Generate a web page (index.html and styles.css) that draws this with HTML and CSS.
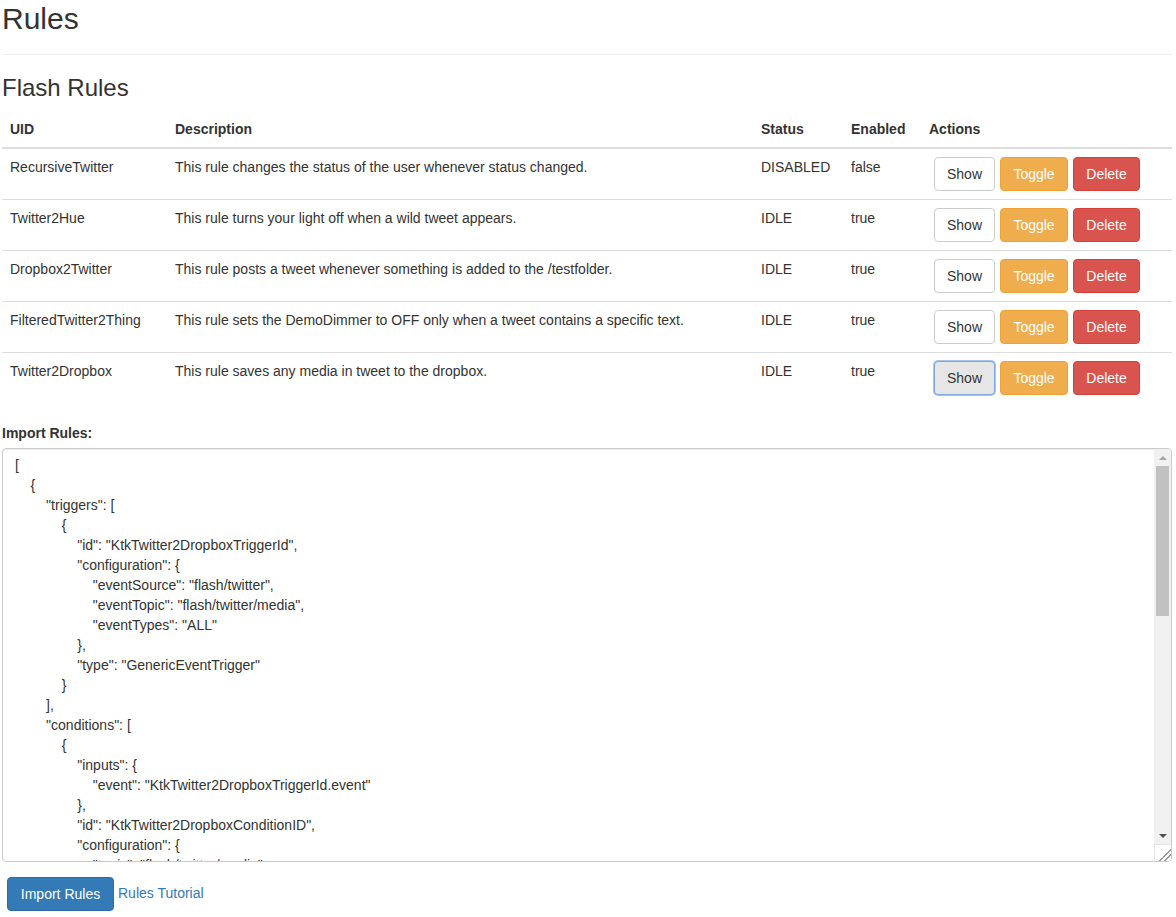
FILE: index.html
```html
<!DOCTYPE html>
<html lang="en">
<head>
<meta charset="utf-8">
<title>Rules</title>
<link rel="stylesheet" href="styles.css">
</head>
<body>
<div class="page">
  <div class="page-header">
    <h2 class="title">Rules</h2>
  </div>
  <h3 class="subtitle">Flash Rules</h3>
  <table class="rules">
    <thead>
      <tr>
        <th class="col-uid">UID</th>
        <th class="col-desc">Description</th>
        <th class="col-status">Status</th>
        <th class="col-enabled">Enabled</th>
        <th class="col-actions">Actions</th>
      </tr>
    </thead>
    <tbody>
      <tr>
        <td>RecursiveTwitter</td>
        <td>This rule changes the status of the user whenever status changed.</td>
        <td>DISABLED</td>
        <td>false</td>
        <td><div class="actions"><button class="btn btn-default">Show</button><button class="btn btn-warning">Toggle</button><button class="btn btn-danger">Delete</button></div></td>
      </tr>
      <tr>
        <td>Twitter2Hue</td>
        <td>This rule turns your light off when a wild tweet appears.</td>
        <td>IDLE</td>
        <td>true</td>
        <td><div class="actions"><button class="btn btn-default">Show</button><button class="btn btn-warning">Toggle</button><button class="btn btn-danger">Delete</button></div></td>
      </tr>
      <tr>
        <td>Dropbox2Twitter</td>
        <td>This rule posts a tweet whenever something is added to the /testfolder.</td>
        <td>IDLE</td>
        <td>true</td>
        <td><div class="actions"><button class="btn btn-default">Show</button><button class="btn btn-warning">Toggle</button><button class="btn btn-danger">Delete</button></div></td>
      </tr>
      <tr>
        <td>FilteredTwitter2Thing</td>
        <td>This rule sets the DemoDimmer to OFF only when a tweet contains a specific text.</td>
        <td>IDLE</td>
        <td>true</td>
        <td><div class="actions"><button class="btn btn-default">Show</button><button class="btn btn-warning">Toggle</button><button class="btn btn-danger">Delete</button></div></td>
      </tr>
      <tr>
        <td>Twitter2Dropbox</td>
        <td>This rule saves any media in tweet to the dropbox.</td>
        <td>IDLE</td>
        <td>true</td>
        <td><div class="actions"><button class="btn btn-default is-focused">Show</button><button class="btn btn-warning">Toggle</button><button class="btn btn-danger">Delete</button></div></td>
      </tr>
    </tbody>
  </table>
  <div class="form-group">
    <label class="field-label" for="import">Import Rules:</label>
    <div class="editor">
      <textarea id="import" class="form-control">[
    {
        "triggers": [
            {
                "id": "KtkTwitter2DropboxTriggerId",
                "configuration": {
                    "eventSource": "flash/twitter",
                    "eventTopic": "flash/twitter/media",
                    "eventTypes": "ALL"
                },
                "type": "GenericEventTrigger"
            }
        ],
        "conditions": [
            {
                "inputs": {
                    "event": "KtkTwitter2DropboxTriggerId.event"
                },
                "id": "KtkTwitter2DropboxConditionID",
                "configuration": {
                    "topic": "flash/twitter/media"
                },
                "type": "EventCondition"
            }
        ],
        "actions": [
            {
                "inputs": {
                    "event": "KtkTwitter2DropboxTriggerId.event"
                },
                "id": "KtkTwitter2DropboxActionId",
                "configuration": {
                    "folder": "/testfolder",
                    "account": "dropbox"
                },
                "type": "DropboxUploadAction"
            }
        ],
        "configuration": {},
        "configDescriptions": [],
        "uid": "Twitter2Dropbox",
        "name": "Twitter2Dropbox",
        "tags": [],
        "visibility": "VISIBLE",
        "description": "This rule saves any media in tweet to the dropbox."
    }
]</textarea>
      <div class="scrollbar" aria-hidden="true">
        <div class="sb-button"><span class="arrow-up"></span></div>
        <div class="sb-track"><div class="sb-thumb"></div></div>
        <div class="sb-button"><span class="arrow-down"></span></div>
      </div>
      <div class="resizer" aria-hidden="true"></div>
    </div>
  </div>
  <div class="footer-actions">
    <button class="btn btn-primary">Import Rules</button>
    <a class="link" href="#">Rules Tutorial</a>
  </div>
</div>
</body>
</html>
```

FILE: styles.css
```css
* {
  box-sizing: border-box;
}

html, body {
  margin: 0;
  padding: 0;
  background: #fff;
}

body {
  font-family: "Liberation Sans", Arial, Helvetica, sans-serif;
  font-size: 14px;
  line-height: 20px;
  color: #333;
}

.page {
  width: 1170px;
  margin-left: 2px;
}

.page-header {
  padding-top: 2px;
  padding-bottom: 9px;
  border-bottom: 1px solid #eee;
  margin-bottom: 20px;
}

.title {
  margin: 0 0 10px 0;
  font-size: 30px;
  font-weight: 500;
  line-height: 33px;
}

.subtitle {
  margin: 0 0 10px 0;
  font-size: 24px;
  font-weight: 500;
  line-height: 26.4px;
}

.rules {
  width: 100%;
  border-collapse: collapse;
  border-spacing: 0;
  table-layout: fixed;
  margin-bottom: 20px;
}

.col-uid { width: 165px; }
.col-desc { width: 586px; }
.col-status { width: 90px; }
.col-enabled { width: 78px; }

.rules th {
  text-align: left;
  font-weight: bold;
  padding: 8px;
  vertical-align: bottom;
  border-bottom: 2px solid #ddd;
}

.rules td {
  padding: 8px;
  vertical-align: top;
  border-top: 1px solid #ddd;
}

.rules tbody tr:first-child td {
  border-top: 0;
}

.actions {
  display: flex;
  gap: 5px;
  padding-left: 5px;
}

.btn {
  display: inline-block;
  font-family: inherit;
  font-size: 14px;
  line-height: 20px;
  padding: 6px 12px;
  border: 1px solid transparent;
  border-radius: 4px;
  cursor: pointer;
  white-space: nowrap;
  margin: 0;
}

.btn-default {
  color: #333;
  background: #fff;
  border-color: #ccc;
  min-width: 61px;
}

.btn-default.is-focused {
  background: #e6e6e6;
  border-color: #7ea6e0;
  box-shadow: 0 0 0 1px #a9c4ec;
}

.btn-warning {
  color: #fff;
  background: #f0ad4e;
  border-color: #eea236;
  min-width: 68px;
}

.btn-danger {
  color: #fff;
  background: #d9534f;
  border-color: #d43f3a;
  min-width: 67px;
}

.btn-primary {
  color: #fff;
  background: #337ab7;
  border-color: #2e6da4;
  margin-left: 5px;
  min-width: 107px;
}

.form-group {
  margin-bottom: 15px;
}

.field-label {
  display: inline-block;
  font-weight: bold;
  margin-bottom: 5px;
}

.editor {
  position: relative;
}

.form-control {
  display: block;
  width: 100%;
  height: 414px;
  padding: 6px 30px 6px 12px;
  font-family: "Liberation Sans", Arial, Helvetica, sans-serif;
  font-size: 14px;
  line-height: 20px;
  color: #333;
  background: #fff;
  border: 1px solid #ccc;
  border-radius: 4px;
  box-shadow: inset 0 1px 1px rgba(0, 0, 0, 0.075);
  resize: none;
  white-space: pre;
  overflow: hidden;
  margin: 0;
}

.scrollbar {
  position: absolute;
  top: 1px;
  right: 1px;
  width: 17px;
  height: 395px;
  background: #f1f1f1;
  display: flex;
  flex-direction: column;
  border-top-right-radius: 3px;
}

.sb-button {
  height: 17px;
  flex: none;
  display: flex;
  align-items: center;
  justify-content: center;
}

.arrow-up {
  width: 0;
  height: 0;
  border-left: 4px solid transparent;
  border-right: 4px solid transparent;
  border-bottom: 4px solid #a3a3a3;
}

.arrow-down {
  width: 0;
  height: 0;
  border-left: 4px solid transparent;
  border-right: 4px solid transparent;
  border-top: 4px solid #505050;
}

.sb-track {
  flex: 1;
  padding: 0 2px;
}

.sb-thumb {
  height: 150px;
  background: #c1c1c1;
}

.resizer {
  position: absolute;
  right: 1px;
  bottom: 1px;
  width: 17px;
  height: 17px;
  background:
    linear-gradient(135deg, transparent 0 62%, #9a9a9a 62% 67%, transparent 67% 78%, #9a9a9a 78% 83%, transparent 83%);
  border-top: 1px solid #e6e6e6;
  border-left: 1px solid #e6e6e6;
  border-bottom-right-radius: 3px;
  background-color: #fff;
}

.footer-actions {
  display: flex;
  align-items: flex-start;
  gap: 4px;
}

.link {
  color: #337ab7;
  text-decoration: none;
  line-height: 32px;
}
```
